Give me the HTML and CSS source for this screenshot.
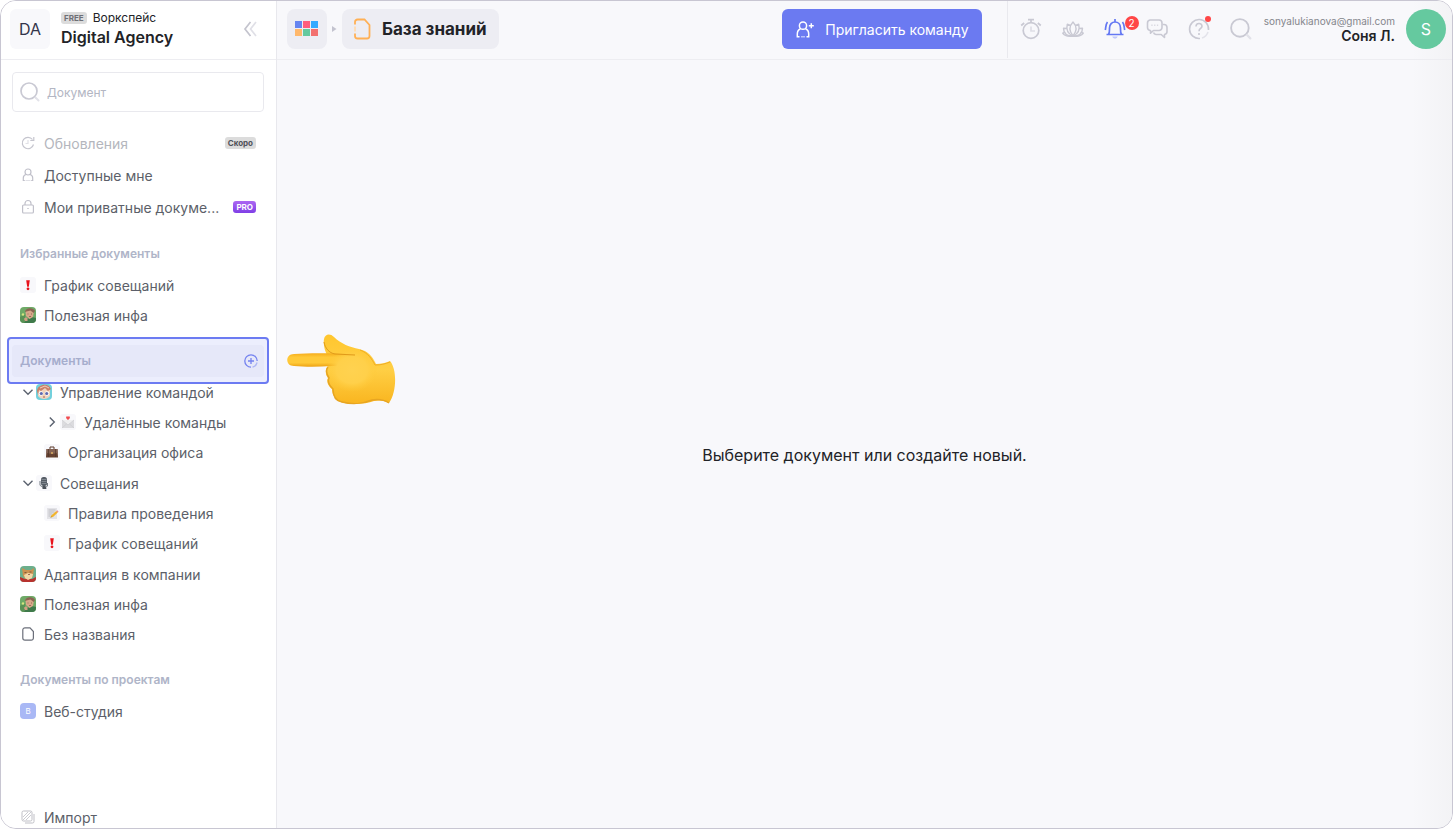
FILE: index.html
```html
<!DOCTYPE html>
<html lang="ru">
<head>
  <meta charset="UTF-8">
  <meta name="viewport" content="width=device-width, initial-scale=1.0">
  <title>База знаний</title>
  <link rel="stylesheet" href="styles.css">
</head>
<body>
  <!-- Shared drawings -->
  <svg class="sprite" width="0" height="0" aria-hidden="true">
    <defs>
      <linearGradient id="hand-fill" x1="0" y1="0" x2="0" y2="1">
        <stop offset="0" stop-color="#ffc62e"/>
        <stop offset="0.5" stop-color="#ffcf45"/>
        <stop offset="1" stop-color="#f9b51f"/>
      </linearGradient>
      <linearGradient id="finger-fill" x1="0" y1="0" x2="0" y2="1">
        <stop offset="0" stop-color="#f6ad1c"/>
        <stop offset="0.3" stop-color="#ffc938"/>
        <stop offset="0.7" stop-color="#ffc938"/>
        <stop offset="1" stop-color="#eda213"/>
      </linearGradient>
      <radialGradient id="palm-fill">
        <stop offset="0" stop-color="#ffd250"/>
        <stop offset="0.6" stop-color="#ffd04a"/>
        <stop offset="1" stop-color="#ffc938" stop-opacity="0"/>
      </radialGradient>
    </defs>
    <symbol id="alert" viewBox="0 0 16 16">
      <rect width="16" height="16" rx="3" fill="#f8f8fb"/>
      <path d="M6.200 3.200h3.600L8.800 9.800H7.200z" fill="#e8121c"/>
      <circle cx="8" cy="11.800" r="1.400" fill="#e8121c"/>
    </symbol>
    <symbol id="info" viewBox="0 0 16 16">
      <rect width="16" height="16" rx="4" fill="#6faa67"/>
      <path d="M0 10l5-3 1 9H4a4 4 0 0 1-4-4z" fill="#5a9256"/>
      <path d="M4 16l3-4 5-2 4 1v1a4 4 0 0 1-4 4z" fill="#3f7a4b"/>
      <path d="M5.500 4c1-2 7-3 8.500 0l-1 6-3.500 2-3.500-3z" fill="#d8a78a"/>
      <path d="M5 5c0-4 8-5.500 10-1l-1.500 2-3-2.500-4 1z" fill="#8b6553"/>
      <path d="M7.500 7h1M11 7h1M9 9.500h2" stroke="#7c5442" stroke-width=".7"/>
      <path d="M4 12c1-2 3-2 3.500 0v2H5z" fill="#d0a084"/>
      <circle cx="3" cy="7.500" r="1.200" fill="#d5e680"/>
    </symbol>
    <symbol id="chevron" viewBox="0 0 12 12">
      <path d="M1.500 3.800L6 8.300l4.500-4.500" fill="none" stroke="#5c6370" stroke-width="1.400"/>
    </symbol>
    <symbol id="search" viewBox="0 0 20 20">
      <circle cx="9" cy="9" r="8" fill="none" stroke="#c9c9d3" stroke-width="1.700"/>
      <path d="M15.500 15.500l3 3" stroke="#e2e2e9" stroke-width="2" stroke-linecap="round"/>
    </symbol>
  </svg>

  <div class="app">
    <aside class="sidebar">
      <div class="workspace">
        <div class="workspace-logo">DA</div>
        <div class="workspace-info">
          <div class="workspace-label"><span class="badge badge-free">FREE</span>Воркспейс</div>
          <div class="workspace-name">Digital Agency</div>
        </div>
        <button class="collapse" aria-label="Свернуть">
          <svg width="14" height="16" viewBox="0 0 14 16" fill="none" stroke-width="1.700">
            <path d="M7.500 1L2 8l5.500 7" stroke="#c4c4ce"/>
            <path d="M13 1L7.500 8l5.500 7" stroke="#e0e0e7"/>
          </svg>
        </button>
      </div>

      <div class="sidebar-body">
        <label class="search-box">
          <svg width="20" height="20"><use href="#search"/></svg>
          <input type="text" placeholder="Документ" aria-label="Документ">
        </label>

        <nav class="menu">
          <a href="#" class="row disabled">
            <svg class="icon" viewBox="0 0 16 16" fill="none" stroke="#c5c5ce" stroke-width="1.200">
              <path d="M13.500 9.500A5.700 5.700 0 1 1 12.500 4.500M13.800 2v3.500h-3.500"/>
              <path d="M8 5v3.500H5.500" stroke="#e1e1e7"/>
            </svg>
            <span class="text">Обновления</span>
            <span class="badge badge-soon">Скоро</span>
          </a>
          <a href="#" class="row">
            <svg class="icon" viewBox="0 0 16 16" fill="none" stroke="#c0c0ca" stroke-width="1.200">
              <circle cx="8" cy="5" r="3"/>
              <path d="M6 7.500c-2 .5-2.700 2-2.700 3.500v2.500h1.500M10 7.500c2 .5 2.700 2 2.700 3.500v2.500h-1.500"/>
              <path d="M5.500 13.500h5" stroke="#e0e0e6"/>
            </svg>
            <span class="text">Доступные мне</span>
          </a>
          <a href="#" class="row">
            <svg class="icon" viewBox="0 0 16 16" fill="none" stroke="#c0c0ca" stroke-width="1.200">
              <rect x="2.600" y="6" width="10.800" height="8" rx="1"/>
              <path d="M5 6V4.500a3 3 0 0 1 6 0V6M7.300 9.500h1.400"/>
            </svg>
            <span class="text">Мои приватные докуме...</span>
            <span class="badge badge-pro">PRO</span>
          </a>
        </nav>

        <h3 class="section-title">Избранные документы</h3>
        <ul class="docs">
          <li><a href="#" class="row"><svg class="icon"><use href="#alert"/></svg><span class="text">График совещаний</span></a></li>
          <li><a href="#" class="row"><svg class="icon"><use href="#info"/></svg><span class="text">Полезная инфа</span></a></li>
        </ul>

        <div class="section-title active">
          <h3>Документы</h3>
          <button class="add" aria-label="Создать документ">
            <svg width="14" height="14" viewBox="0 0 14 14" fill="none" stroke="#7583f0" stroke-width="1.300">
              <path d="M7 13.200A6.200 6.200 0 1 1 13.200 7M7 4v6M4 7h6"/>
              <path d="M13.100 8.500A6.200 6.200 0 0 1 8.500 13.100" stroke="#b9c0f5"/>
            </svg>
          </button>
        </div>
        <ul class="docs">
          <li>
            <a href="#" class="row parent">
              <svg class="arrow"><use href="#chevron"/></svg>
              <svg class="icon" viewBox="0 0 16 16">
                <rect width="16" height="16" rx="4" fill="#72d0dc"/>
                <path d="M2 6c1-5 11-6 12 0v6c-3 4-9 4-12 0z" fill="#efd3bd"/>
                <path d="M1 7c0-7 12-9 14-2l-3 2-3-3-4 3-2-1-1 5z" fill="#c98168"/>
                <path d="M4 4l5-2 4 2" fill="none" stroke="#f0d0bd"/>
                <circle cx="5" cy="9.500" r="2.200" fill="#fff"/><circle cx="11" cy="9.500" r="2.200" fill="#fff"/>
                <circle cx="5.300" cy="9.500" r="1.600" fill="#5f69b0"/><circle cx="10.700" cy="9.500" r="1.600" fill="#5f69b0"/>
                <path d="M7 13h2" stroke="#a65f54"/>
              </svg>
              <span class="text">Управление командой</span>
            </a>
            <ul class="docs nested">
              <li>
                <a href="#" class="row parent">
                  <svg class="arrow closed"><use href="#chevron"/></svg>
                  <svg class="icon" viewBox="0 0 16 16">
                    <rect width="16" height="16" rx="3" fill="#f8f8fb"/>
                    <path d="M2 6h12v8H2z" fill="#dcdcdf"/>
                    <path d="M2 6h12l-6 5z" fill="#efeff0"/>
                    <path d="M2 6l6 5 6-5M2 14l4.500-4M14 14l-4.500-4" fill="none" stroke="#c9c9ce" stroke-width=".6"/>
                    <path d="M8 6C6.500 5 6 4 6.100 3 6.300 2 7.500 1.900 8 2.700c.5-.8 1.700-.7 1.900.3C10 4 9.500 5 8 6z" fill="#f14c50"/>
                  </svg>
                  <span class="text">Удалённые команды</span>
                </a>
              </li>
              <li>
                <a href="#" class="row">
                  <svg class="icon" viewBox="0 0 16 16">
                    <rect width="16" height="16" rx="3" fill="#f8f8fb"/>
                    <path d="M6 5V3h4v2" fill="none" stroke="#5a3928"/>
                    <path d="M2.500 5h11l.5 8.500H2z" fill="#654131"/>
                    <path d="M2.500 5h11v4l-5.500 1-5.500-1z" fill="#826052"/>
                    <path d="M4.500 5v8M11.500 5v8" stroke="#4e352a" stroke-width=".7"/>
                    <path d="M7.300 8h1.400v2H7.300z" fill="#e1b365"/>
                  </svg>
                  <span class="text">Организация офиса</span>
                </a>
              </li>
            </ul>
          </li>
          <li>
            <a href="#" class="row parent">
              <svg class="arrow"><use href="#chevron"/></svg>
              <svg class="icon" viewBox="0 0 16 16">
                <rect width="16" height="16" rx="3" fill="#f8f8fb"/>
                <rect x="5" y="2" width="6" height="9" rx="2.500" fill="#565d66"/>
                <path d="M5.500 4.500h5M5.500 6.500h5M5.500 8.500h5" stroke="#9299a1" stroke-width=".7"/>
                <path d="M4 6v4c1 2.500 6.500 3 7.500 1v-3" fill="none" stroke="#737a82"/>
                <path d="M6.500 11h3l1 3h-4z" fill="#4a5058"/>
              </svg>
              <span class="text">Совещания</span>
            </a>
            <ul class="docs nested">
              <li>
                <a href="#" class="row">
                  <svg class="icon" viewBox="0 0 16 16">
                    <rect width="16" height="16" rx="3" fill="#f8f8fb"/>
                    <path d="M3 3h10v11H3z" fill="#e3e3e7"/>
                    <path d="M4.500 5h7M4.500 7h6M4.500 9h4M4.500 11h2" stroke="#adadb5" stroke-width=".7"/>
                    <path d="M6.500 12.500l1-2.200 4.800-4.300 1.500 1.600L9 12z" fill="#f2b42c"/>
                    <path d="M12.300 6l1-.8 1.300 1.500-.8.900z" fill="#e8878f"/>
                    <path d="M6.500 12.500l.5-1.100.7.700z" fill="#3f3f3f"/>
                  </svg>
                  <span class="text">Правила проведения</span>
                </a>
              </li>
              <li><a href="#" class="row"><svg class="icon"><use href="#alert"/></svg><span class="text">График совещаний</span></a></li>
            </ul>
          </li>
          <li>
            <a href="#" class="row">
              <svg class="icon" viewBox="0 0 16 16">
                <rect width="16" height="16" rx="4" fill="#6caf8c"/>
                <path d="M0 11l5 2h7l4-2v1a4 4 0 0 1-4 4H4a4 4 0 0 1-4-4z" fill="#b8322e"/>
                <path d="M2 2l4 2h5l3-2-1 8-4 3H6l-3-3z" fill="#cb9150"/>
                <path d="M4 9l4-2 5 1-1 4-4 2-3-2z" fill="#f1d7a6"/>
                <path d="M4.500 6.500h2M9.500 6h2" stroke="#6d4d36" stroke-width=".8"/>
                <path d="M8 8.500h2" stroke="#8a5141" stroke-width=".8"/>
              </svg>
              <span class="text">Адаптация в компании</span>
            </a>
          </li>
          <li><a href="#" class="row"><svg class="icon"><use href="#info"/></svg><span class="text">Полезная инфа</span></a></li>
          <li>
            <a href="#" class="row">
              <svg class="icon" viewBox="0 0 16 16" fill="none" stroke="#6b6f7a" stroke-width="1.200">
                <path d="M5 1.800h5L13.400 5.500V12a2.200 2.200 0 0 1-2.200 2.200H5A2.200 2.200 0 0 1 2.800 12V4A2.200 2.200 0 0 1 5 1.800z"/>
              </svg>
              <span class="text">Без названия</span>
            </a>
          </li>
        </ul>

        <h3 class="section-title">Документы по проектам</h3>
        <ul class="docs">
          <li><a href="#" class="row"><span class="icon project">В</span><span class="text">Веб-студия</span></a></li>
        </ul>

        <a href="#" class="row import">
          <svg class="icon" viewBox="0 0 16 16" fill="none" stroke="#bfbfc6">
            <rect x="2" y="2" width="10" height="10" rx="1.500"/>
            <path d="M14 5v7.500a1.500 1.500 0 0 1-1.500 1.500H5"/>
            <path d="M3 8l5-5M3 11l8-8M6 11l5-5" stroke-width=".8"/>
          </svg>
          <span class="text">Импорт</span>
        </a>
      </div>
    </aside>

    <div class="content">
      <header class="topbar">
        <button class="apps" aria-label="Приложения">
          <svg width="26" height="16" viewBox="0 0 26 16">
            <rect x="1" y="0" width="7" height="7" fill="#6685f0"/>
            <rect x="9" y="0" width="7" height="7" fill="#ff5d7d"/>
            <rect x="17" y="0" width="7" height="7" fill="#33aaff"/>
            <rect x="1" y="8" width="7" height="7" fill="#ffb86c"/>
            <rect x="9" y="8" width="7" height="7" fill="#65c99e"/>
            <rect x="17" y="8" width="7" height="7" fill="#f2706f"/>
          </svg>
        </button>
        <svg class="crumb" width="5" height="6" viewBox="0 0 5 6"><path d="M0 0l4.500 3L0 6z" fill="#c3c3cf"/></svg>
        <a href="#" class="page-title">
          <svg width="18" height="22" viewBox="0 0 18 22" fill="none" stroke="#ffb055" stroke-width="1.800">
            <path d="M2 6.500V4a2.500 2.500 0 0 1 2.500-2.500h7L16.500 7v11a2.500 2.500 0 0 1-2.500 2.500H4.500A2.500 2.500 0 0 1 2 18v-2.500"/>
            <path d="M2 8.500v5" stroke="#ffdcb3"/>
          </svg>
          База знаний
        </a>
        <button class="invite">
          <svg width="18" height="17" viewBox="0 0 18 17" fill="none" stroke="#fff" stroke-width="1.500">
            <circle cx="7" cy="4.700" r="3.600"/>
            <path d="M4.500 7.800C2.300 8.800 1.300 10.500 1.300 13v2.800h2.200M9.500 7.800c2.200 1 3.200 2.700 3.200 5.200v2.800h-2.200"/>
            <path d="M5 15.800h4" stroke="#b8c0fa"/>
            <path d="M15.300 2.200v5M12.800 4.700h5"/>
          </svg>
          Пригласить команду
        </button>

        <div class="tools">
          <button class="tool" aria-label="Таймер">
            <svg viewBox="0 0 22 22" fill="none" stroke="#c9c9d3" stroke-width="1.700">
              <circle cx="11" cy="12.500" r="7.800"/>
              <path d="M8 1.700h6M11 2v2.500M1.200 7.500l3-2.500M20.800 7.500l-3-2.500"/>
              <path d="M11 8.500v4.500h4" stroke="#dedee6"/>
            </svg>
          </button>
          <button class="tool" aria-label="Лотос">
            <svg viewBox="0 0 22 22" fill="none" stroke="#c9c9d3" stroke-width="1.400" stroke-linejoin="round">
              <path d="M11 4c3.800 4 4 9 0 14-4-5-3.800-10 0-14z"/>
              <path d="M8.500 7.500L5.300 6.200c-1.300 5 .2 9.300 5.700 11.800M13.500 7.500l3.200-1.300c1.300 5-.2 9.300-5.700 11.800"/>
              <path d="M4.900 10.500l-3.400-.3c0 4 2.500 7.800 9.500 7.800 7 0 9.500-3.800 9.500-7.800l-3.400.3"/>
              <path d="M2.500 14.300l-1.800.9c1.800 2.800 5.500 3.500 10.300 2.800 4.800.7 8.500 0 10.300-2.800l-1.800-.9"/>
            </svg>
          </button>
          <button class="tool" aria-label="Уведомления">
            <svg viewBox="0 0 22 22" fill="none" stroke="#6478f3" stroke-width="1.700">
              <path d="M2.500 16.500h17M4.500 16.500c1.200-2 1-4 1-6.500 0-3.600 2.500-6 5.500-6s5.500 2.400 5.500 6c0 2.500-.2 4.500 1 6.500M11 4V1"/>
              <path d="M3.500 4c-2 2.500-1.500 5-2.200 8M18.500 4c2 2.500 1.500 5 2.200 8"/>
              <path d="M8.200 18.500a2.900 2.900 0 0 0 5.600 0z" fill="#c0c8fa" stroke="none"/>
            </svg>
            <span class="count">2</span>
          </button>
          <button class="tool" aria-label="Чат">
            <svg viewBox="0 0 22 22" fill="none" stroke="#c9c9d3" stroke-width="1.600" stroke-linejoin="round">
              <path d="M4 2h9a3 3 0 0 1 3 3v4.500a3 3 0 0 1-3 3H7.500l-3 2.700v-2.700A3 3 0 0 1 1.500 9.500V5A3 3 0 0 1 4 2z"/>
              <path d="M16.500 6.500H18a3 3 0 0 1 3 3v4a3 3 0 0 1-2.500 3v3l-3.300-3H10a3 3 0 0 1-2.500-2"/>
              <path d="M5.300 7.200h1.300M8.100 7.200h1.300M10.900 7.200h1.300" stroke="#dadae2"/>
            </svg>
          </button>
          <button class="tool" aria-label="Помощь">
            <svg viewBox="0 0 22 22" fill="none" stroke="#c9c9d3" stroke-width="1.600">
              <path d="M12 20.500A9.500 9.500 0 1 1 20.500 12"/>
              <path d="M20 14a9.500 9.500 0 0 1-6 6" stroke="#e3e3ea"/>
              <path d="M8 8.500c0-4 6-4 6-.3 0 2.300-3 2.300-3 5M11 15v2"/>
            </svg>
            <span class="dot"></span>
          </button>
          <button class="tool" aria-label="Поиск">
            <svg viewBox="0 0 20 20"><use href="#search"/></svg>
          </button>
        </div>

        <div class="user">
          <div class="user-info">
            <div class="user-email">sonyalukianova@gmail.com</div>
            <div class="user-name">Соня Л.</div>
          </div>
          <div class="avatar">S</div>
        </div>
      </header>

      <main class="main">
        <p class="empty">Выберите документ или создайте новый.</p>
        <svg class="pointer" width="110" height="72" viewBox="0 0 110 72">
          <path d="M40 21C38 17 36 11 37 5c1-5 6-6 10-2 7 7 16 10 25 12 9 2 13 7 17 15 5 0 10-1 14-3 7 8 7 31-1 42-6-3-10-3-15-2-10 4-28 4-36 0-4-3-6-8-6-12-4-3-6-8-4-11-3-4-3-9 0-12z" fill="url(#hand-fill)"/>
          <path d="M7 20c15-1 34-1 54 0l8 5c-2 6-12 7-24 7-14 1-27 1-38 0C-2 32-2 20 7 20z" fill="url(#finger-fill)"/>
          <ellipse cx="65" cy="36" rx="26" ry="22" fill="url(#palm-fill)"/>
          <path d="M37 8c1 6 5 11 11 12l20 1" fill="none" stroke="#e09a1a"/>
          <path d="M41 33c-3 4-1 8 1 11-2 4 1 8 4 11 0 7 3 12 9 13 12 3 20 2 30-2 6-1 11-1 17 3" fill="none" stroke="#e7a522" stroke-width="1.500"/>
          <path d="M73 16c8 3 12 9 15 15 6 0 10-1 15-3" fill="none" stroke="#f0ae24"/>
        </svg>
      </main>
    </div>
  </div>
</body>
</html>
```
FILE: styles.css
```css
* {
  box-sizing: border-box;
}

body {
  margin: 0;
  font-family: Inter, "Liberation Sans", sans-serif;
  font-size: 14px;
  color: #222327;
  background-color: #fff;
}

button {
  font: inherit;
  border: none;
  padding: 0;
  background: none;
  cursor: pointer;
}

a {
  color: inherit;
  text-decoration: none;
}

svg {
  display: block;
  flex-shrink: 0;
}

.sprite {
  position: absolute;
}

.app {
  display: flex;
  height: 100vh;
  border: 1px solid #c8c6d2;
  border-radius: 16px;
  overflow: hidden;
}

/* Sidebar */
.sidebar {
  width: 276px;
  flex-shrink: 0;
  display: flex;
  flex-direction: column;
  border-right: 1px solid #e8e8ed;
  background-color: #fff;
}

.workspace {
  height: 59px;
  flex-shrink: 0;
  display: flex;
  align-items: center;
  padding: 0 19px 2px 9px;
  border-bottom: 1px solid #ededf1;
}

.workspace-logo {
  width: 40px;
  height: 40px;
  display: flex;
  align-items: center;
  justify-content: center;
  border-radius: 6px;
  background-color: #f8f8fb;
  color: #33344a;
  font-size: 16px;
}

.workspace-info {
  flex: 1;
  margin-left: 11px;
}

.workspace-label {
  display: flex;
  align-items: center;
  font-size: 12px;
  line-height: 16px;
}

.workspace-name {
  font-size: 16px;
  line-height: 22px;
  font-weight: 600;
}

.badge {
  height: 12px;
  padding: 0 3px;
  border-radius: 3px;
  font-size: 8px;
  line-height: 12px;
  font-weight: 700;
}

.badge-free {
  margin-right: 6px;
  background-color: #dcdcdc;
  color: #6e7076;
}

.badge-soon {
  background-color: #dcdcdc;
  color: #50525a;
}

.badge-pro {
  background: linear-gradient(#ac67f2, #7f3fe6);
  color: #fff;
}

.sidebar-body {
  flex: 1;
  display: flex;
  flex-direction: column;
  padding: 12px 12px 0 11px;
  overflow: hidden;
}

.search-box {
  height: 40px;
  flex-shrink: 0;
  display: flex;
  align-items: center;
  gap: 5px;
  padding: 0 7px;
  border: 1px solid #e9e9ee;
  border-radius: 4px;
}

.search-box input {
  flex: 1;
  min-width: 0;
  padding: 0 2px;
  border: none;
  outline: none;
  font: inherit;
  font-size: 12px;
}

.search-box input::placeholder {
  color: #b3b6c3;
}

.menu {
  margin-top: 15px;
}

.row {
  display: flex;
  align-items: center;
  gap: 8px;
  height: 30px;
  padding: 0 8px;
  color: #5c5f69;
}

.menu .row {
  height: 32px;
}

.row.disabled {
  color: #b4b6bd;
}

.text {
  flex: 1;
  white-space: nowrap;
}

.icon {
  width: 16px;
  height: 16px;
}

.section-title {
  height: 32px;
  flex-shrink: 0;
  margin: 15px 0 0;
  padding: 0 8px;
  font-size: 12px;
  line-height: 32px;
  font-weight: 600;
  color: #afb5c8;
}

.section-title.active {
  position: relative;
  display: flex;
  align-items: center;
  justify-content: space-between;
  padding-right: 6px;
  border-radius: 4px;
  background-color: #f8f8fb;
}

.section-title.active::after {
  content: "";
  position: absolute;
  inset: -8px -5px -7px;
  border: 2px solid #6c7bf2;
  border-radius: 4px;
  background-color: rgba(108, 123, 242, 0.13);
  pointer-events: none;
}

.section-title h3 {
  margin: 0;
  font: inherit;
}

/* Documents tree */
.docs {
  flex-shrink: 0;
  margin: 0;
  padding: 0;
  list-style: none;
}

.nested {
  padding: 0 0 1px 24px;
}

.parent .arrow {
  width: 12px;
  height: 12px;
  margin: 0 -6px 0 2px;
}

.arrow.closed {
  transform: rotate(-90deg);
}

.project {
  border-radius: 4px;
  background-color: #a9b8f5;
  color: #fff;
  font-size: 8px;
  line-height: 16px;
  text-align: center;
}

.import {
  height: 22px;
  flex-shrink: 0;
  margin-top: auto;
}

/* Top bar */
.content {
  flex: 1;
  min-width: 0;
  display: flex;
  flex-direction: column;
  background: linear-gradient(to left, #f3f3f5, #f8f8fb 40px);
}

.topbar {
  height: 59px;
  flex-shrink: 0;
  display: flex;
  align-items: center;
  padding: 0 6px 2px 10px;
  border-bottom: 1px solid #ededf1;
}

.apps {
  width: 40px;
  height: 40px;
  display: flex;
  align-items: center;
  justify-content: center;
  border-radius: 8px;
  background-color: #ededf3;
}

.crumb {
  margin: 0 5px;
}

.page-title {
  height: 40px;
  display: flex;
  align-items: center;
  gap: 11px;
  padding: 0 12px 0 11px;
  border-radius: 8px;
  background-color: #ededf3;
  font-size: 17px;
  font-weight: 700;
  white-space: nowrap;
}

.invite {
  height: 40px;
  display: flex;
  align-items: center;
  gap: 11px;
  margin: 0 25px 0 auto;
  padding: 0 13px 0 14px;
  border-radius: 6px;
  background-color: #6b7af1;
  color: #fff;
  white-space: nowrap;
}

.tools {
  height: 57px;
  display: flex;
  align-items: center;
  gap: 20px;
  padding-left: 12px;
  border-left: 1px solid #e9e9ee;
}

.tool {
  position: relative;
}

.tool svg {
  width: 22px;
  height: 22px;
}

.count {
  position: absolute;
  top: -2px;
  left: 21px;
  width: 14px;
  height: 14px;
  border-radius: 50%;
  background-color: #ff4747;
  color: #fff;
  font-size: 10px;
  line-height: 14px;
}

.dot {
  position: absolute;
  top: -2px;
  right: -1px;
  width: 6px;
  height: 6px;
  border-radius: 50%;
  background-color: #ff4747;
}

.user {
  display: flex;
  align-items: center;
  gap: 11px;
  margin-left: 12px;
}

.user-info {
  text-align: right;
}

.user-email {
  font-size: 10px;
  line-height: 14px;
  color: #85868c;
}

.user-name {
  font-size: 14px;
  line-height: 16px;
  font-weight: 600;
}

.avatar {
  width: 40px;
  height: 40px;
  border-radius: 50%;
  background-color: #65c99f;
  color: #fff;
  font-size: 16px;
  line-height: 40px;
  text-align: center;
}

.main {
  position: relative;
  flex: 1;
  display: flex;
  align-items: center;
  justify-content: center;
  padding-top: 22px;
}

.empty {
  margin: 0;
  font-size: 16px;
}

.pointer {
  position: absolute;
  top: 274px;
  left: 10px;
}
```
